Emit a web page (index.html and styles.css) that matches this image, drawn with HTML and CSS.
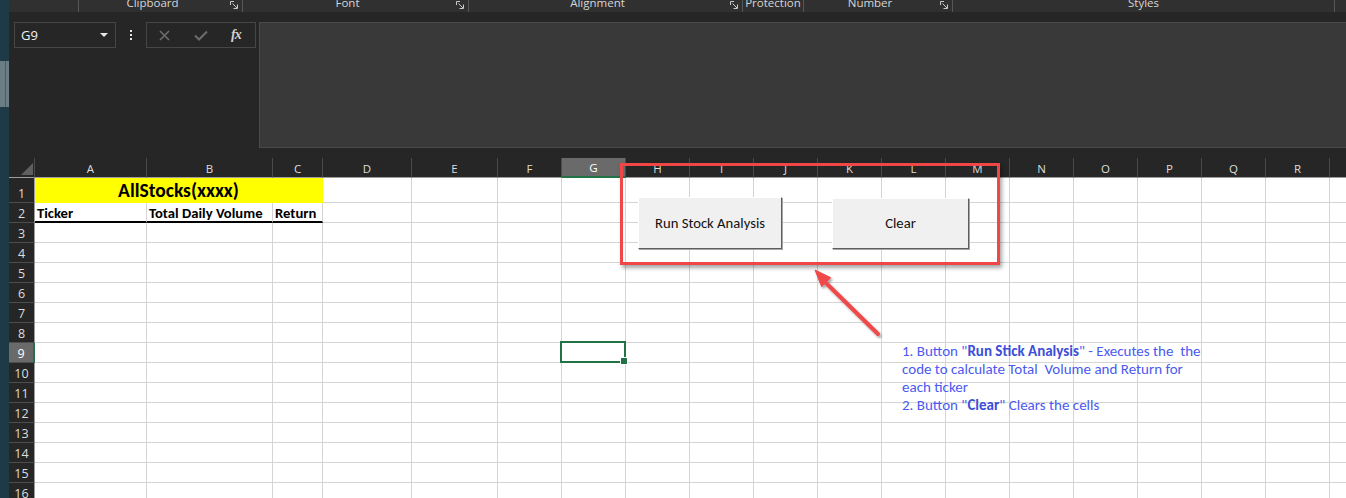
FILE: index.html
```html
<!DOCTYPE html>
<html lang="en">
<head>
<meta charset="utf-8">
<title>Excel - AllStocks</title>
<link rel="stylesheet" href="styles.css">
</head>
<body>
<div class="edge"><div class="thumb"></div></div>
<div class="main">
  <div class="ribbon">
    <div class="rg g0"></div>
    <div class="rg g1"><span class="rl">Clipboard</span><span class="launch"><svg width="8" height="8" viewBox="0 0 8 8"><path d="M0.5 0.5V4M0.5 0.5H4M2.5 2.5L7 7M7.5 3.5V7.5H3.5" fill="none" stroke="#c9c9c9" stroke-width="1"/></svg></span></div>
    <div class="rg g2"><span class="rl">Font</span><span class="launch"><svg width="8" height="8" viewBox="0 0 8 8"><path d="M0.5 0.5V4M0.5 0.5H4M2.5 2.5L7 7M7.5 3.5V7.5H3.5" fill="none" stroke="#c9c9c9" stroke-width="1"/></svg></span></div>
    <div class="rg g3"><span class="rl">Alignment</span><span class="launch"><svg width="8" height="8" viewBox="0 0 8 8"><path d="M0.5 0.5V4M0.5 0.5H4M2.5 2.5L7 7M7.5 3.5V7.5H3.5" fill="none" stroke="#c9c9c9" stroke-width="1"/></svg></span></div>
    <div class="rg g4"><span class="rl">Protection</span></div>
    <div class="rg g5"><span class="rl">Number</span><span class="launch"><svg width="8" height="8" viewBox="0 0 8 8"><path d="M0.5 0.5V4M0.5 0.5H4M2.5 2.5L7 7M7.5 3.5V7.5H3.5" fill="none" stroke="#c9c9c9" stroke-width="1"/></svg></span></div>
    <div class="rg g6"><span class="rl">Styles</span></div>
    <div class="rg g7"></div>
  </div>

  <div class="formula">
    <div class="namebox"><span class="ref">G9</span><svg class="caret" width="8" height="4" viewBox="0 0 8 4"><path d="M0 0H8L4 4Z" fill="#e6e6e6"/></svg></div>
    <div class="dots"><i></i><i></i><i></i></div>
    <div class="fbtns">
      <svg width="11" height="11" viewBox="0 0 11 11"><path d="M1 1L10 10M10 1L1 10" stroke="#6c6c6c" stroke-width="1.6" fill="none"/></svg>
      <svg width="14" height="11" viewBox="0 0 14 11"><path d="M1 5.5L5 9.5L13 1.5" stroke="#6c6c6c" stroke-width="2" fill="none"/></svg>
      <span class="fx">fx</span>
    </div>
    <div class="finput"></div>
  </div>

  <div class="sheet">
    <div class="grid">
      <div class="corner"><svg width="12" height="12" viewBox="0 0 12 12"><path d="M12 0V12H0Z" fill="#5f5f5f"/></svg></div>
      <div class="ch">A</div><div class="ch">B</div><div class="ch">C</div><div class="ch">D</div><div class="ch">E</div><div class="ch">F</div><div class="ch sel">G</div><div class="ch">H</div><div class="ch">I</div><div class="ch">J</div><div class="ch">K</div><div class="ch">L</div><div class="ch">M</div><div class="ch">N</div><div class="ch">O</div><div class="ch">P</div><div class="ch">Q</div><div class="ch">R</div><div class="ch">S</div>

      <div class="rh">1</div><div class="c title">AllStocks(xxxx)</div>
      <div class="c"></div><div class="c"></div><div class="c"></div><div class="c"></div>
      <div class="c"></div><div class="c"></div><div class="c"></div><div class="c"></div>
      <div class="c"></div><div class="c"></div><div class="c"></div><div class="c"></div>
      <div class="c"></div><div class="c"></div><div class="c"></div><div class="c"></div>

      <div class="rh">2</div><div class="c hd">Ticker</div><div class="c hd">Total Daily Volume</div><div class="c hd">Return</div>
      <div class="c"></div><div class="c"></div><div class="c"></div><div class="c"></div>
      <div class="c"></div><div class="c"></div><div class="c"></div><div class="c"></div>
      <div class="c"></div><div class="c"></div><div class="c"></div><div class="c"></div>
      <div class="c"></div><div class="c"></div><div class="c"></div><div class="c"></div>

      <div class="rh">3</div><div class="c"></div><div class="c"></div><div class="c"></div><div class="c"></div><div class="c"></div><div class="c"></div><div class="c"></div><div class="c"></div><div class="c"></div><div class="c"></div><div class="c"></div><div class="c"></div><div class="c"></div><div class="c"></div><div class="c"></div><div class="c"></div><div class="c"></div><div class="c"></div><div class="c"></div>
      <div class="rh">4</div><div class="c"></div><div class="c"></div><div class="c"></div><div class="c"></div><div class="c"></div><div class="c"></div><div class="c"></div><div class="c"></div><div class="c"></div><div class="c"></div><div class="c"></div><div class="c"></div><div class="c"></div><div class="c"></div><div class="c"></div><div class="c"></div><div class="c"></div><div class="c"></div><div class="c"></div>
      <div class="rh">5</div><div class="c"></div><div class="c"></div><div class="c"></div><div class="c"></div><div class="c"></div><div class="c"></div><div class="c"></div><div class="c"></div><div class="c"></div><div class="c"></div><div class="c"></div><div class="c"></div><div class="c"></div><div class="c"></div><div class="c"></div><div class="c"></div><div class="c"></div><div class="c"></div><div class="c"></div>
      <div class="rh">6</div><div class="c"></div><div class="c"></div><div class="c"></div><div class="c"></div><div class="c"></div><div class="c"></div><div class="c"></div><div class="c"></div><div class="c"></div><div class="c"></div><div class="c"></div><div class="c"></div><div class="c"></div><div class="c"></div><div class="c"></div><div class="c"></div><div class="c"></div><div class="c"></div><div class="c"></div>
      <div class="rh">7</div><div class="c"></div><div class="c"></div><div class="c"></div><div class="c"></div><div class="c"></div><div class="c"></div><div class="c"></div><div class="c"></div><div class="c"></div><div class="c"></div><div class="c"></div><div class="c"></div><div class="c"></div><div class="c"></div><div class="c"></div><div class="c"></div><div class="c"></div><div class="c"></div><div class="c"></div>
      <div class="rh">8</div><div class="c"></div><div class="c"></div><div class="c"></div><div class="c"></div><div class="c"></div><div class="c"></div><div class="c"></div><div class="c"></div><div class="c"></div><div class="c"></div><div class="c"></div><div class="c"></div><div class="c"></div><div class="c"></div><div class="c"></div><div class="c"></div><div class="c"></div><div class="c"></div><div class="c"></div>
      <div class="rh sel">9</div><div class="c"></div><div class="c"></div><div class="c"></div><div class="c"></div><div class="c"></div><div class="c"></div><div class="c active"></div><div class="c"></div><div class="c"></div><div class="c"></div><div class="c"></div><div class="c"></div><div class="c"></div><div class="c"></div><div class="c"></div><div class="c"></div><div class="c"></div><div class="c"></div><div class="c"></div>
      <div class="rh">10</div><div class="c"></div><div class="c"></div><div class="c"></div><div class="c"></div><div class="c"></div><div class="c"></div><div class="c"></div><div class="c"></div><div class="c"></div><div class="c"></div><div class="c"></div><div class="c"></div><div class="c"></div><div class="c"></div><div class="c"></div><div class="c"></div><div class="c"></div><div class="c"></div><div class="c"></div>
      <div class="rh">11</div><div class="c"></div><div class="c"></div><div class="c"></div><div class="c"></div><div class="c"></div><div class="c"></div><div class="c"></div><div class="c"></div><div class="c"></div><div class="c"></div><div class="c"></div><div class="c"></div><div class="c"></div><div class="c"></div><div class="c"></div><div class="c"></div><div class="c"></div><div class="c"></div><div class="c"></div>
      <div class="rh">12</div><div class="c"></div><div class="c"></div><div class="c"></div><div class="c"></div><div class="c"></div><div class="c"></div><div class="c"></div><div class="c"></div><div class="c"></div><div class="c"></div><div class="c"></div><div class="c"></div><div class="c"></div><div class="c"></div><div class="c"></div><div class="c"></div><div class="c"></div><div class="c"></div><div class="c"></div>
      <div class="rh">13</div><div class="c"></div><div class="c"></div><div class="c"></div><div class="c"></div><div class="c"></div><div class="c"></div><div class="c"></div><div class="c"></div><div class="c"></div><div class="c"></div><div class="c"></div><div class="c"></div><div class="c"></div><div class="c"></div><div class="c"></div><div class="c"></div><div class="c"></div><div class="c"></div><div class="c"></div>
      <div class="rh">14</div><div class="c"></div><div class="c"></div><div class="c"></div><div class="c"></div><div class="c"></div><div class="c"></div><div class="c"></div><div class="c"></div><div class="c"></div><div class="c"></div><div class="c"></div><div class="c"></div><div class="c"></div><div class="c"></div><div class="c"></div><div class="c"></div><div class="c"></div><div class="c"></div><div class="c"></div>
      <div class="rh">15</div><div class="c"></div><div class="c"></div><div class="c"></div><div class="c"></div><div class="c"></div><div class="c"></div><div class="c"></div><div class="c"></div><div class="c"></div><div class="c"></div><div class="c"></div><div class="c"></div><div class="c"></div><div class="c"></div><div class="c"></div><div class="c"></div><div class="c"></div><div class="c"></div><div class="c"></div>
      <div class="rh">16</div><div class="c"></div><div class="c"></div><div class="c"></div><div class="c"></div><div class="c"></div><div class="c"></div><div class="c"></div><div class="c"></div><div class="c"></div><div class="c"></div><div class="c"></div><div class="c"></div><div class="c"></div><div class="c"></div><div class="c"></div><div class="c"></div><div class="c"></div><div class="c"></div><div class="c"></div>
    </div>

    <div class="callout"></div>
    <button class="xbtn run">Run Stock Analysis</button>
    <button class="xbtn clear">Clear</button>
    <svg class="arrow" width="90" height="80" viewBox="0 0 90 80">
      <defs><filter id="sh" x="-20%" y="-20%" width="150%" height="150%"><feDropShadow dx="1.5" dy="2" stdDeviation="1.3" flood-color="#000" flood-opacity="0.35"/></filter></defs>
      <g filter="url(#sh)" fill="#f04848" stroke="#f04848">
        <path d="M78 72L25 20" stroke-width="4" stroke-linecap="round" fill="none"/>
        <path d="M15 8L21.7 24.7L30.7 15.7Z" stroke-width="1" stroke-linejoin="round"/>
      </g>
    </svg>
    <div class="note">1. Button "<b>Run Stick Analysis</b>" - Executes the&nbsp; the<br>code to calculate Total&nbsp; Volume and Return for<br>each ticker<br>2. Button "<b>Clear</b>" Clears the cells</div>
  </div>
</div>
</body>
</html>
```

FILE: styles.css
```css
* { box-sizing: border-box; }
html, body { margin: 0; padding: 0; }
body {
  display: flex;
  width: 1346px;
  height: 498px;
  overflow: hidden;
  background: #262626;
  font-family: "Open Sans", "Noto Sans", sans-serif;
}

/* left window edge */
.edge {
  width: 9px;
  flex: none;
  background: #1f3a47;
  display: flex;
  flex-direction: column;
}
.edge .thumb {
  margin-top: 61px;
  height: 46px;
  background: linear-gradient(to right, #6b7d85 0 5px, #4e5c62 5px 6px, #6b7d85 6px);
}

.main {
  flex: 1;
  min-width: 0;
  display: flex;
  flex-direction: column;
}

/* ribbon group labels */
.ribbon {
  height: 12px;
  flex: none;
  background: #303030;
  display: flex;
  color: #d6d6d6;
  font-size: 11.5px;
  overflow: hidden;
}
.rg {
  flex: none;
  display: flex;
  border-right: 1px solid #565656;
}
.g0 { width: 70px; }
.g1 { width: 164px; }
.g2 { width: 226px; }
.g3 { width: 274px; }
.g4 { width: 61px; }
.g5 { width: 149px; }
.g6 { width: 382px; }
.g7 { flex: 1; border-right: none; }
.rl {
  flex: 1;
  text-align: center;
  line-height: 12px;
  margin-top: -3px;
  white-space: nowrap;
}
.launch {
  width: 16px;
  padding: 1px 4px 0;
  display: flex;
  align-items: flex-start;
}

/* formula bar */
.formula {
  height: 146px;
  flex: none;
  padding-top: 10px;
  display: flex;
  align-items: flex-start;
  background: #262626;
}
.namebox {
  margin-left: 5px;
  width: 102px;
  height: 26px;
  border: 1px solid #464646;
  display: flex;
  align-items: center;
  padding: 0 7px 0 6px;
  color: #f2f2f2;
  font-size: 13px;
}
.namebox .ref { flex: 1; }
.dots {
  width: 30px;
  height: 26px;
  display: flex;
  flex-direction: column;
  align-items: center;
  justify-content: center;
  gap: 2px;
}
.dots i {
  width: 2px;
  height: 2px;
  background: #e6e6e6;
}
.fbtns {
  width: 110px;
  height: 26px;
  border: 1px solid #464646;
  display: flex;
  align-items: center;
  padding-left: 12px;
  gap: 24px;
}
.fbtns .fx {
  font-family: "Liberation Serif", serif;
  font-style: italic;
  font-weight: bold;
  font-size: 14px;
  color: #d2d2d2;
  margin-left: -1px;
  letter-spacing: -1px;
}
.finput {
  flex: 1;
  margin-left: 3px;
  height: 126px;
  background: #393939;
  border: 1px solid #4a4a4a;
  border-right: none;
}

/* sheet */
.sheet {
  position: relative;
  flex: 1;
  overflow: hidden;
}
.grid {
  display: grid;
  grid-template-columns: 26px 112px 126px 50px 89px 86px repeat(14, 64px);
  grid-template-rows: 20px 25px repeat(15, 20px);
}
.corner {
  border-right: 1px solid #4a4a4a;
  border-bottom: 1px solid #9d9d9d;
  display: flex;
  justify-content: flex-end;
  align-items: flex-end;
  padding: 0 1px 2px 0;
}
.ch {
  border-right: 1px solid #4a4a4a;
  border-bottom: 1px solid #9d9d9d;
  color: #dedede;
  font-size: 11.5px;
  display: flex;
  align-items: center;
  justify-content: center;
  padding-top: 1px;
}
.ch.sel {
  background: #6a6a6a;
  color: #ffffff;
  border-bottom: 2px solid #217346;
}
.rh {
  background: #262626;
  border-right: 1px solid #9d9d9d;
  border-bottom: 1px solid #4d4d4d;
  color: #dedede;
  font-size: 12.5px;
  line-height: 12px;
  display: flex;
  align-items: flex-end;
  justify-content: center;
  padding-bottom: 2px;
}
.rh.sel {
  background: #6a6a6a;
  color: #ffffff;
  border-right: 2px solid #217346;
}
.c {
  background: #ffffff;
  border-right: 1px solid #d4d4d4;
  border-bottom: 1px solid #d4d4d4;
  font-family: "Carlito", "Lato", sans-serif;
  font-size: 14.67px;
  color: #000;
  display: flex;
  align-items: flex-end;
  white-space: nowrap;
  overflow: hidden;
}
.c.title {
  grid-column: span 3;
  background: #ffff00;
  border-color: transparent;
  justify-content: center;
  font-weight: bold;
  font-size: 19.5px;
  line-height: 20px;
  padding-bottom: 2px;
}
.c.hd {
  font-weight: bold;
  border-bottom: 2px solid #000;
  line-height: 15px;
  padding: 0 2px 0;
}
.c.active {
  position: relative;
  overflow: visible;
}
.c.active::after {
  content: "";
  position: absolute;
  left: -2px;
  top: -2px;
  right: -1px;
  bottom: -1px;
  border: 2px solid #217346;
}
.c.active::before {
  content: "";
  position: absolute;
  right: -3px;
  bottom: -3px;
  width: 6px;
  height: 6px;
  background: #217346;
  border: 1px solid #fff;
  z-index: 1;
}

/* drawn shapes over the sheet */
.callout {
  position: absolute;
  left: 611px;
  top: 5px;
  width: 380px;
  height: 102px;
  border: 3px solid #f04646;
  box-shadow: 2px 3px 4px rgba(0, 0, 0, 0.35);
}
.xbtn {
  position: absolute;
  margin: 0;
  padding: 0;
  background: #f0f0f0;
  border: 1px solid;
  border-color: #ffffff #5e5e5e #5e5e5e #ffffff;
  box-shadow: 1px 1px 0 #a6a6a6;
  font-family: "Carlito", "Lato", sans-serif;
  font-size: 14.67px;
  color: #111;
}
.xbtn.run {
  left: 629px;
  top: 39px;
  width: 144px;
  height: 52px;
}
.xbtn.clear {
  left: 823px;
  top: 40px;
  width: 137px;
  height: 51px;
  padding-bottom: 1px;
}
.arrow {
  position: absolute;
  left: 791px;
  top: 104px;
}
.note {
  position: absolute;
  left: 893px;
  top: 184px;
  width: 320px;
  font-family: "Carlito", "Lato", sans-serif;
  font-size: 15px;
  line-height: 18px;
  color: #4a5af0;
  white-space: nowrap;
}
.note b { color: #3d4ed8; }
```
